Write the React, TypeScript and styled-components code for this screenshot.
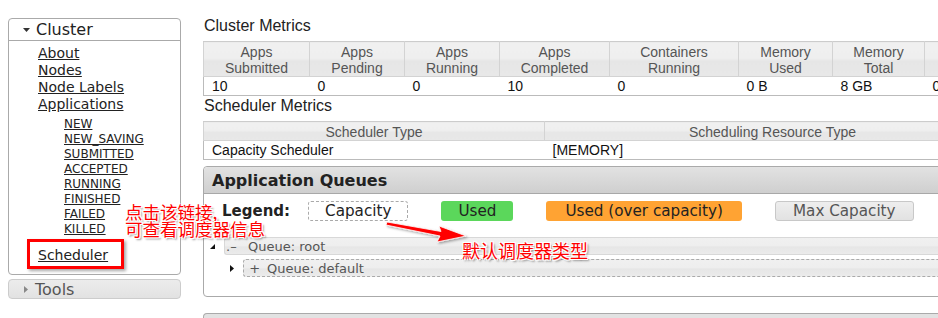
import React from "react";
import styled, { createGlobalStyle } from "styled-components";

const Global = createGlobalStyle`
  html, body { margin: 0; padding: 0; overflow: hidden; background: #fff; }
  body { font-family: "DejaVu Sans", Verdana, sans-serif; color: #222; }
`;

const Page = styled.div`
  position: relative;
  display: flex;
  align-items: flex-start;
  gap: 22px;
  padding: 16px 0 0 8px;
  width: 1300px;
  height: 318px;
  box-sizing: border-box;
`;

const Sidebar = styled.div`
  width: 173px;
  flex: none;
  margin-top: 2px;
`;

const NavBox = styled.div`
  border: 1px solid #aaa;
  border-radius: 4px;
  height: 257px;
  box-sizing: border-box;
`;

const NavHeader = styled.div`
  height: 21px;
  display: flex;
  align-items: center;
  gap: 6px;
  padding-left: 14px;
  border-bottom: 1px solid #aaa;
  font-size: 16px;
  color: #222;
`;

const Caret = styled.svg`
  flex: none;
`;

const NavList = styled.div`
  padding: 4px 0 0 29px;
  display: flex;
  flex-direction: column;
  align-items: flex-start;
`;

const NavLink = styled.a<{ $sub?: boolean }>`
  font-size: ${(p) => (p.$sub ? "12px" : "14px")};
  line-height: ${(p) => (p.$sub ? "15px" : "17px")};
  margin-left: ${(p) => (p.$sub ? "26px" : "0")};
  color: #222;
  text-decoration: underline;
  cursor: pointer;
`;

const SubList = styled.div`
  display: flex;
  flex-direction: column;
  align-items: flex-start;
  margin-top: 4px;
  margin-bottom: 10px;
`;

const ToolsBar = styled.div`
  margin-top: 4px;
  height: 20px;
  box-sizing: border-box;
  border: 1px solid #ccc;
  border-radius: 4px;
  background: linear-gradient(#ececec, #e2e2e2);
  display: flex;
  align-items: center;
  gap: 7px;
  padding-left: 15px;
  font-size: 16px;
  color: #555;
`;

const Main = styled.div`
  width: 1100px;
  flex: none;
  display: flex;
  flex-direction: column;
  align-items: flex-start;
`;

const SectionTitle = styled.div`
  font-family: "Liberation Sans", Arial, sans-serif;
  font-size: 16px;
  line-height: 18px;
  color: #222;
  padding: 1px 0 0 1px;
  margin-bottom: 6px;
`;

const Table = styled.table`
  border-collapse: collapse;
  table-layout: fixed;
  font-family: "Liberation Sans", Arial, sans-serif;
  font-size: 14px;
  border: 1px solid #bbb;
`;

const Th = styled.th<{ $w?: number }>`
  box-sizing: border-box;
  width: ${(p) => (p.$w ? `${p.$w}px` : "auto")};
  font-weight: normal;
  color: #555;
  line-height: 16px;
  padding: 2px 4px 0;
  border: 1px solid #d3d3d3;
  border-top-color: #ccc;
  background: linear-gradient(#f0f0f0 0%, #efefef 46%, #e6e6e6 54%, #e8e8e8 100%);
  text-align: center;
  white-space: nowrap;
  overflow: hidden;
`;

const Td = styled.td`
  color: #111;
  line-height: 16px;
  padding: 1px 8px;
  border-top: 1px solid #ccc;
  white-space: nowrap;
  text-align: left;
  overflow: hidden;
`;

const Panel = styled.div`
  align-self: stretch;
  margin-top: 6px;
  border: 1px solid #aaa;
  border-radius: 4px 0 0 4px;
  height: 131px;
  box-sizing: border-box;
  font-family: "DejaVu Sans", Verdana, sans-serif;
`;

const PanelHeader = styled.div`
  height: 26px;
  border-bottom: 1px solid #a8a8a8;
  background: linear-gradient(#e2e2e2, #cfcfcf);
  border-radius: 4px 0 0 0;
  display: flex;
  align-items: center;
  padding-left: 8px;
  font-size: 16px;
  font-weight: bold;
  color: #222;
`;

const LegendRow = styled.div`
  display: flex;
  align-items: center;
  padding: 6px 0 0 18px;
  height: 21px;
`;

const LegendLabel = styled.span`
  font-weight: bold;
  font-size: 15px;
  margin-right: 18px;
`;

const LegendItem = styled.span<{ $kind: "cap" | "used" | "over" | "max" }>`
  height: 20px;
  box-sizing: border-box;
  display: inline-flex;
  align-items: center;
  padding: 0 ${(p) => (p.$kind === "over" ? "18px" : p.$kind === "max" ? "17px" : "16px")};
  margin-right: 33px;
  border-radius: 3px;
  font-size: 15.2px;
  color: ${(p) => (p.$kind === "max" ? "#555" : "#222")};
  border: ${(p) =>
    p.$kind === "cap"
      ? "1px dashed #aaa"
      : p.$kind === "max"
      ? "1px solid #c8c8c8"
      : "1px solid transparent"};
  background: ${(p) =>
    p.$kind === "used"
      ? "#5bd75b"
      : p.$kind === "over"
      ? "#ffa333"
      : p.$kind === "max"
      ? "linear-gradient(#eeeeee, #e2e2e2)"
      : "#fff"};
`;

const Tree = styled.div`
  margin-top: 16px;
  display: flex;
  flex-direction: column;
  gap: 4px;
`;

const TreeRow = styled.div<{ $indent: number }>`
  display: flex;
  align-items: center;
  padding-left: ${(p) => p.$indent}px;
  gap: 9px;
`;

const QueueBar = styled.div<{ $dashed?: boolean }>`
  flex: 1;
  height: 18px;
  box-sizing: border-box;
  border: 1px ${(p) => (p.$dashed ? "dashed #aaa" : "solid #d8d8d8")};
  border-right: none;
  border-radius: 3px 0 0 3px;
  background: linear-gradient(#f0f0f0 0%, #eeeeee 50%, #e6e6e6 55%, #ebebeb 100%);
  display: flex;
  align-items: center;
  font-size: 13px;
  color: #555;
  white-space: nowrap;
`;

const Sign = styled.span<{ $w: number }>`
  width: ${(p) => p.$w}px;
  padding-left: 1px;
  flex: none;
`;

const NextPanel = styled.div`
  align-self: stretch;
  margin-top: 16px;
  height: 10px;
  border: 1px solid #aaa;
  border-bottom: none;
  border-radius: 4px 0 0 0;
  background: #e2e2e2;
`;

const Note = styled.div<{ $size: number }>`
  position: absolute;
  font-family: "Noto Sans CJK SC", sans-serif;
  font-size: ${(p) => p.$size}px;
  line-height: ${(p) => p.$size - 0.5}px;
  color: #ff0000;
  white-space: nowrap;
  text-shadow:
    -1px -1px 0 #fff, 1px -1px 0 #fff, -1px 1px 0 #fff, 1px 1px 0 #fff,
    2px 2px 2px rgba(0, 0, 0, 0.45);
`;

const RedBox = styled.div`
  position: absolute;
  left: 27px;
  top: 239px;
  width: 97px;
  height: 30px;
  box-sizing: border-box;
  border: 3px solid #ff0000;
  box-shadow: 2px 2px 3px rgba(0, 0, 0, 0.35);
`;

const Arrow = styled.svg`
  position: absolute;
  left: 380px;
  top: 212px;
  overflow: visible;
`;

const subLinks = [
  "NEW",
  "NEW_SAVING",
  "SUBMITTED",
  "ACCEPTED",
  "RUNNING",
  "FINISHED",
  "FAILED",
  "KILLED",
];

const metricsCols: [string, string, number, string][] = [
  ["Apps", "Submitted", 106, "10"],
  ["Apps", "Pending", 95, "0"],
  ["Apps", "Running", 95, "0"],
  ["Apps", "Completed", 110, "10"],
  ["Containers", "Running", 129, "0"],
  ["Memory", "Used", 94, "0 B"],
  ["Memory", "Total", 92, "8 GB"],
  ["Memory", "Reserved", 94, "0 B"],
  ["VCores", "Used", 94, "0"],
];

export default function App() {
  return (
    <>
      <Global />
      <Page>
        <Sidebar>
          <NavBox>
            <NavHeader>
              <Caret width="7" height="4" viewBox="0 0 7 4">
                <polygon points="0,0 7,0 3.5,4" fill="#333" />
              </Caret>
              Cluster
            </NavHeader>
            <NavList>
              <NavLink>About</NavLink>
              <NavLink>Nodes</NavLink>
              <NavLink>Node Labels</NavLink>
              <NavLink>Applications</NavLink>
              <SubList>
                {subLinks.map((s) => (
                  <NavLink key={s} $sub>
                    {s}
                  </NavLink>
                ))}
              </SubList>
              <NavLink>Scheduler</NavLink>
            </NavList>
          </NavBox>
          <ToolsBar>
            <Caret width="4" height="7" viewBox="0 0 4 7">
              <polygon points="0,0 4,3.5 0,7" fill="#888" />
            </Caret>
            Tools
          </ToolsBar>
        </Sidebar>

        <Main>
          <SectionTitle>Cluster Metrics</SectionTitle>
          <Table>
            <thead>
              <tr>
                {metricsCols.map(([a, b, w]) => (
                  <Th key={a + b} $w={w}>
                    {a}
                    <br />
                    {b}
                  </Th>
                ))}
              </tr>
            </thead>
            <tbody>
              <tr>
                {metricsCols.map(([a, b, , v]) => (
                  <Td key={a + b}>{v}</Td>
                ))}
              </tr>
            </tbody>
          </Table>

          <SectionTitle>Scheduler Metrics</SectionTitle>
          <Table>
            <thead>
              <tr>
                <Th $w={341}>Scheduler Type</Th>
                <Th $w={456}>Scheduling Resource Type</Th>
                <Th $w={220}>Minimum Allocation</Th>
              </tr>
            </thead>
            <tbody>
              <tr>
                <Td>Capacity Scheduler</Td>
                <Td>[MEMORY]</Td>
                <Td>&lt;memory:1024, vCores:1&gt;</Td>
              </tr>
            </tbody>
          </Table>

          <Panel>
            <PanelHeader>Application Queues</PanelHeader>
            <LegendRow>
              <LegendLabel>Legend:</LegendLabel>
              <LegendItem $kind="cap">Capacity</LegendItem>
              <LegendItem $kind="used">Used</LegendItem>
              <LegendItem $kind="over">Used (over capacity)</LegendItem>
              <LegendItem $kind="max">Max Capacity</LegendItem>
            </LegendRow>
            <Tree>
              <TreeRow $indent={6}>
                <svg width="5" height="5" viewBox="0 0 5 5">
                  <polygon points="5,0 5,5 0,5" fill="#111" />
                </svg>
                <QueueBar>
                  <Sign $w={22}>.–</Sign>Queue: root
                </QueueBar>
              </TreeRow>
              <TreeRow $indent={26}>
                <svg width="4" height="7" viewBox="0 0 4 7">
                  <polygon points="0,0 4,3.5 0,7" fill="#111" />
                </svg>
                <QueueBar $dashed>
                  <Sign $w={22}>&nbsp;+</Sign>Queue: default
                </QueueBar>
              </TreeRow>
            </Tree>
          </Panel>
          <NextPanel />
        </Main>

        <RedBox />
        <Note $size={17.5} style={{ left: 125, top: 203 }}>
          点击该链接,
          <br />
          可查看调度器信息
        </Note>
        <Note $size={18} style={{ left: 462, top: 242 }}>
          默认调度器类型
        </Note>
        <Arrow width="90" height="30" viewBox="0 0 90 30">
          <defs>
            <filter id="sh" x="-20%" y="-50%" width="140%" height="200%">
              <feDropShadow dx="1.5" dy="1.5" stdDeviation="1" floodColor="#000" floodOpacity="0.35" />
            </filter>
          </defs>
          <path
            d="M7 10 L61 19.5 L59 14 L86 24 L57 30 L60 24 L6 13 Z"
            fill="#ff0000"
            stroke="#fff"
            strokeWidth="0.8"
            filter="url(#sh)"
          />
        </Arrow>
      </Page>
    </>
  );
}
